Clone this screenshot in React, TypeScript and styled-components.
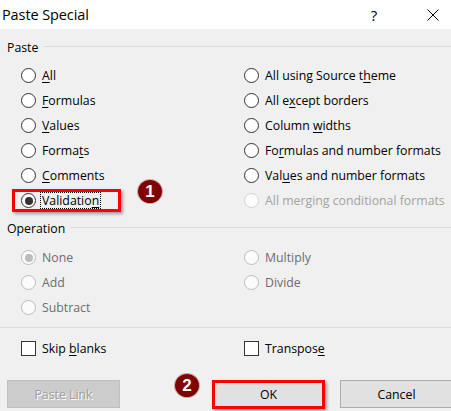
import React from "react";
import styled, { createGlobalStyle, css } from "styled-components";

const Global = createGlobalStyle`
  html, body { margin: 0; padding: 0; background: #f0f0f0; }
  body { font-family: "Open Sans", "Noto Sans", "DejaVu Sans", sans-serif; font-size: 12.3px; color: #000; }
`;

const Dialog = styled.div`
  width: 451px;
  height: 411px;
  background: #f0f0f0;
  overflow: hidden;
  display: flex;
  flex-direction: column;
`;

const TitleBar = styled.div`
  height: 29px;
  background: #ffffff;
  display: flex;
  align-items: center;
  padding-left: 2px;
  flex-shrink: 0;
`;

const Title = styled.div`
  font-size: 14.5px;
  flex: 1;
  letter-spacing: -0.1px;
`;

const TitleButton = styled.div<{ $w: number; $ml?: number }>`
  width: ${(p) => p.$w}px;
  margin-left: ${(p) => p.$ml ?? 0}px;
  height: 29px;
  display: flex;
  align-items: center;
  justify-content: center;
  font-size: 15px;
  color: #000;
`;

const GroupHeader = styled.div<{ $top: number }>`
  display: flex;
  align-items: center;
  height: 18px;
  margin-top: ${(p) => p.$top}px;
  padding-left: 7px;
  gap: 6px;
`;

const GroupLabel = styled.span`
  line-height: 18px;
`;

const GroupLine = styled.div`
  flex: 1;
  height: 1px;
  background: #dcdcdc;
  margin-top: -3px;
`;

const OptionGrid = styled.div<{ $rows: number; $top: number }>`
  display: grid;
  grid-template-columns: 223px 1fr;
  grid-template-rows: repeat(${(p) => p.$rows}, 25px);
  grid-auto-flow: column;
  padding-left: 21px;
  margin-top: ${(p) => p.$top}px;
`;

const Option = styled.div`
  position: relative;
  display: flex;
  align-items: center;
  gap: 6px;
  height: 25px;
`;

type Tone = "normal" | "muted" | "faint";

const Circle = styled.span<{ $tone: Tone; $checked?: boolean }>`
  box-sizing: border-box;
  width: 15px;
  height: 15px;
  border-radius: 50%;
  flex-shrink: 0;
  display: flex;
  align-items: center;
  justify-content: center;
  ${(p) =>
    p.$tone === "normal"
      ? css`
          border: 1px solid #333333;
          background: #ffffff;
        `
      : p.$tone === "muted"
      ? css`
          border: 1px solid #bcbcbc;
          background: #fbfbfb;
        `
      : css`
          border: 1px solid #d2d2d2;
          background: #fcfcfc;
        `}
  &::after {
    content: "";
    display: ${(p) => (p.$checked ? "block" : "none")};
    width: 8px;
    height: 8px;
    border-radius: 50%;
    background: ${(p) => (p.$tone === "normal" ? "#333333" : "#bcbcbc")};
  }
`;

const Label = styled.span<{ $tone: Tone; $focus?: boolean }>`
  white-space: nowrap;
  line-height: 15px;
  color: ${(p) => (p.$tone === "normal" ? "#000" : p.$tone === "muted" ? "#6d6d6d" : "#a3a3a3")};
  ${(p) =>
    p.$focus &&
    css`
      outline: 1px dotted #000;
      outline-offset: 0px;
      padding: 0 1px;
      margin-left: -1px;
    `}
`;

const Acc = styled.span`
  text-decoration: underline;
  text-underline-offset: 2px;
`;

const HighlightFrame = styled.div<{ $l: number; $t: number; $w: number; $h: number }>`
  position: absolute;
  left: ${(p) => p.$l}px;
  top: ${(p) => p.$t}px;
  width: ${(p) => p.$w}px;
  height: ${(p) => p.$h}px;
  box-sizing: border-box;
  border: 3px solid #ff0000;
  box-shadow: 2px 2px 3px rgba(0, 0, 0, 0.35);
  pointer-events: none;
`;

const Badge = styled.div<{ $l: number; $t: number }>`
  position: absolute;
  left: ${(p) => p.$l}px;
  top: ${(p) => p.$t}px;
  width: 24px;
  height: 23px;
  border-radius: 50%;
  background: radial-gradient(circle at 50% 45%, #8a0a0a 0%, #7a0000 70%, #6a0000 100%);
  box-shadow: 0 0 0 1px rgba(150, 60, 60, 0.4);
  color: #ffffff;
  font-family: "Liberation Sans", Arial, sans-serif;
  font-weight: bold;
  font-size: 17px;
  display: flex;
  align-items: center;
  justify-content: center;
  line-height: 1;
`;

const Separator = styled.div`
  height: 1px;
  background: #dcdcdc;
  margin-top: 7px;
`;

const CheckRow = styled.div`
  display: grid;
  grid-template-columns: 223px 1fr;
  padding-left: 21px;
  margin-top: 8px;
  height: 24px;
`;

const Box = styled.span`
  box-sizing: border-box;
  width: 15px;
  height: 15px;
  border: 1px solid #333333;
  background: #ffffff;
  flex-shrink: 0;
`;

const ButtonRow = styled.div`
  display: flex;
  margin-top: 20px;
  padding-left: 7px;
  position: relative;
`;

const Button = styled.div<{ $disabled?: boolean; $default?: boolean; $gap: number }>`
  position: relative;
  box-sizing: border-box;
  width: 113px;
  height: 28px;
  flex-shrink: 0;
  margin-left: ${(p) => p.$gap}px;
  display: flex;
  align-items: center;
  justify-content: center;
  ${(p) =>
    p.$disabled
      ? css`
          background: #cccccc;
          border: 1px solid #bfbfbf;
          color: #a0a0a0;
          text-shadow: 1px 1px 0 #ffffff;
        `
      : p.$default
      ? css`
          background: #e1e1e1;
          border: 2px solid #3b74c4;
          color: #000;
        `
      : css`
          background: #e1e1e1;
          border: 1px solid #adadad;
          color: #000;
        `}
`;

type Opt = { text: React.ReactNode; tone?: Tone; checked?: boolean; focus?: boolean; extra?: React.ReactNode };

const u = (s: string, i: number) => (
  <>
    {s.slice(0, i)}
    <Acc>{s[i]}</Acc>
    {s.slice(i + 1)}
  </>
);

const pasteOptions: Opt[] = [
  { text: u("All", 0) },
  { text: u("Formulas", 0) },
  { text: u("Values", 0) },
  { text: u("Formats", 5) },
  { text: u("Comments", 0) },
  {
    text: u("Validation", 9),
    checked: true,
    focus: true,
    extra: (
      <>
        <HighlightFrame $l={-9} $t={1} $w={109} $h={23} />
        <Badge $l={117} $t={-8}>1</Badge>
      </>
    ),
  },
  { text: u("All using Source theme", 18) },
  { text: u("All except borders", 5) },
  { text: u("Column widths", 7) },
  { text: u("Formulas and number formats", 2) },
  { text: u("Values and number formats", 3) },
  { text: "All merging conditional formats", tone: "faint" },
];

const opOptions: Opt[] = [
  { text: "None", tone: "muted", checked: true },
  { text: "Add", tone: "muted" },
  { text: "Subtract", tone: "muted" },
  { text: "Multiply", tone: "muted" },
  { text: "Divide", tone: "muted" },
];

const Radio: React.FC<{ o: Opt }> = ({ o }) => {
  const tone = o.tone ?? "normal";
  return (
    <Option>
      <Circle $tone={tone} $checked={o.checked} />
      <Label $tone={tone} $focus={o.focus}>{o.text}</Label>
      {o.extra}
    </Option>
  );
};

const CloseIcon = () => (
  <svg width="12" height="12" viewBox="0 0 12 12">
    <path d="M0.5 0.5 L11.5 11.5 M11.5 0.5 L0.5 11.5" stroke="#000" strokeWidth="1" fill="none" />
  </svg>
);

export default function App() {
  return (
    <>
      <Global />
      <Dialog>
        <TitleBar>
          <Title>Paste Special</Title>
          <TitleButton $w={30}>?</TitleButton>
          <TitleButton $w={30} $ml={29}>
            <CloseIcon />
          </TitleButton>
          <TitleButton $w={3} />
        </TitleBar>

        <GroupHeader $top={10}>
          <GroupLabel>Paste</GroupLabel>
          <GroupLine />
        </GroupHeader>
        <OptionGrid $rows={6} $top={6}>
          {pasteOptions.map((o, i) => (
            <Radio key={i} o={o} />
          ))}
        </OptionGrid>

        <GroupHeader $top={7}>
          <GroupLabel>Operation</GroupLabel>
          <GroupLine />
        </GroupHeader>
        <OptionGrid $rows={3} $top={7}>
          {opOptions.map((o, i) => (
            <Radio key={i} o={o} />
          ))}
        </OptionGrid>

        <Separator />

        <CheckRow>
          <Option>
            <Box />
            <Label $tone="normal">Skip {u("blanks", 0)}</Label>
          </Option>
          <Option>
            <Box />
            <Label $tone="normal">{u("Transpose", 8)}</Label>
          </Option>
        </CheckRow>

        <ButtonRow>
          <Button $disabled $gap={0}>Paste Link</Button>
          <Button $default $gap={92}>
            OK
            <HighlightFrame $l={-2} $t={-2} $w={113} $h={29} />
            <Badge $l={-39} $t={-8}>2</Badge>
          </Button>
          <Button $gap={15}>Cancel</Button>
        </ButtonRow>
      </Dialog>
    </>
  );
}
